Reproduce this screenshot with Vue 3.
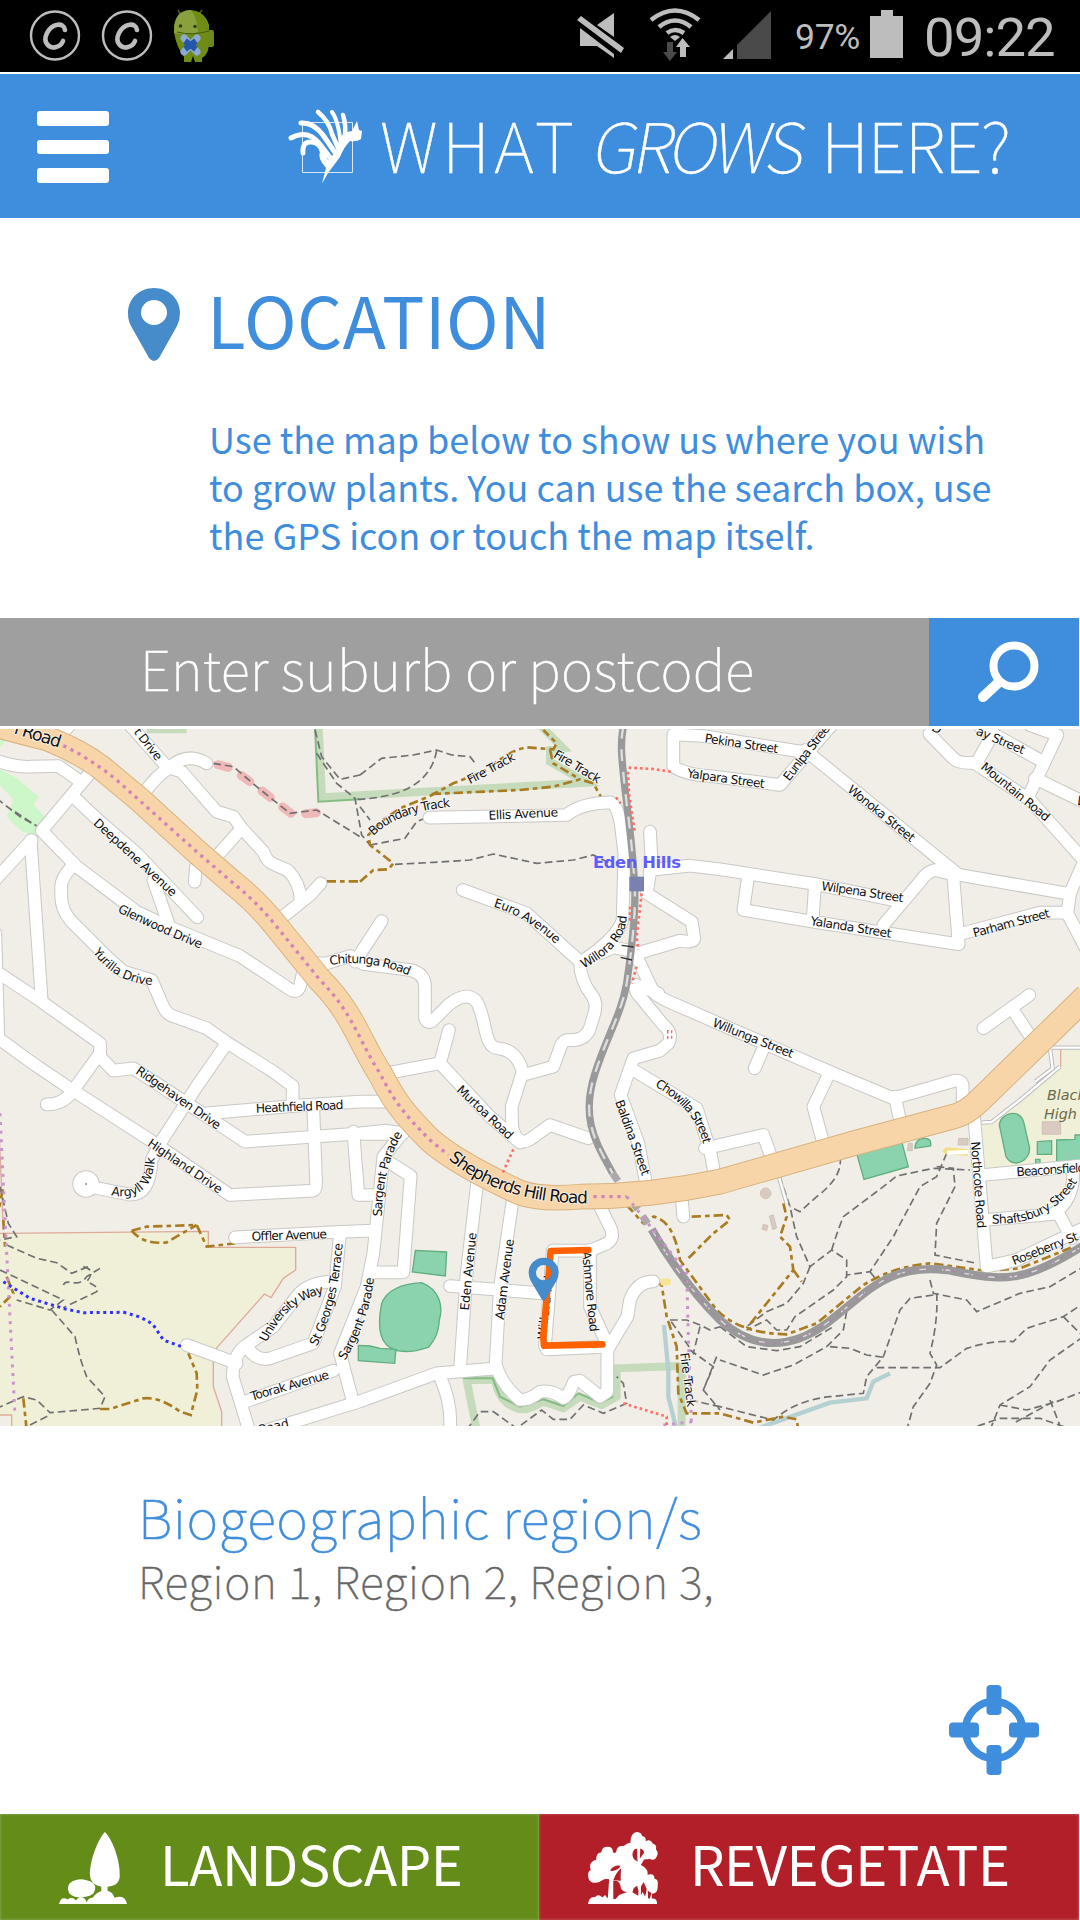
<script setup>
const roads = [
  'M-20 118Q40 142 90 140L175 138L235 180',
  'M265 165L125 332L230 440L410 575L500 618L720 708L870 808Q895 825 902 790L908 760',
  'M222 232L300 305L410 400L592 592',
  'M215 440Q178 480 184 510Q178 565 215 605L320 710L370 755L455 780L490 860Q500 885 530 892L620 925L680 967L820 1055L878 1098V1150',
  'M92 362L125 840', 'M-15 480L95 360',
  'M-10 755L125 845L300 970V1010L340 1052L400 1045L660 1215L735 1265L1080 1240L1160 1232L1210 1240',
  'M-14 640L-5 955', 'M-5 955L110 1038L220 1112L450 1260L690 1425L940 1412Q950 1408 948 1380L940 1165',
  'M300 1000L220 1110Q190 1155 140 1153',
  'M680 970L590 1100L480 1270L455 1320Q450 1425 390 1424L270 1400',
  'M620 1180L900 1156L1080 1145H1200',
  'M390 15L500 140L545 155L650 275L700 290L725 325L790 395Q800 425 820 432L865 452Q900 490 902 540',
  'M428 225Q470 165 510 142Q560 95 620 130', 'M725 325L645 415', 'M588 440L584 485',
  'M962 490L930 525L830 605', 'M460 480L505 610', 'M205 20L180 45',
  'M920 730H980L1050 708L1090 732L1230 750Q1275 760 1275 800V895Q1285 915 1300 900L1345 855Q1400 810 1430 845C1460 895 1450 985 1495 985Q1550 990 1568 1055L1535 1160L1537 1225Q1555 1280 1590 1258L1650 1215L1765 1255',
  'M1145 603L1085 695L1065 725',
  'M1388 510L1580 580L1740 725Q1740 780 1775 825Q1795 850 1780 890L1768 930Q1750 965 1700 960Q1685 965 1680 985L1660 1040L1580 1062',
  'M1288 293L1560 288L1700 285Q1740 250 1830 247Q1850 250 1862 310L1873 400L1868 600Q1850 655 1745 725',
  'M1347 930L1320 1030L1160 1060', 'M1320 1030L1470 1190L1560 1268',
  'M1950 335L1955 430L1940 520L2075 605L2083 655Q2080 670 2040 662L1920 698L1840 682L1800 700',
  'M1910 710L1960 815Q1970 830 2030 855L2160 912L2350 995L2500 1060L2680 1135L2865 1082Q2888 1080 2888 1100V1165',
  'M1975 820L1910 795Q1900 810 1920 830L1990 915Q2020 940 2005 970L1980 992L1900 1015L1862 1125L1915 1270L1940 1400',
  'M1900 1050L2090 1165L2130 1290L2145 1370', 'M2115 1285L2160 1275L2290 1245L2315 1315',
  'M1950 450L2070 437L2160 448L2445 492L2680 540',
  'M2245 465L2230 570L2440 605L2876 673L2860 470', 'M2445 492L2438 600', 'M2870 465L2805 450Q2780 455 2760 485L2650 615',
  'M2415 90L2870 460', 'M2850 460L3210 522L3202 580L3260 690', 'M3210 520L3250 430',
  'M2925 130L3090 240L3260 430', 'M2880 642L3120 578H3200',
  'M2425 98L2110 48L2020 43V140Q2060 165 2130 168L2340 195L2495 15',
  'M2788 42L2860 115Q2875 132 2930 128L2980 40', 'M2940 20L3120 120', 'M3090 15L3172 45L3085 230', 'M3105 175L3260 250',
  'M2950 925L3088 825', 'M3035 865L3095 955', 'M2290 985L2264 1045',
  'M2490 1055L2440 1160L2470 1270', 'M2685 1130L2702 1210',
  'M2922 1185L2960 1640L3050 1620L3260 1520', 'M2950 1365L3260 1335', 'M2955 1500L3160 1482Q3220 1440 3220 1360', 'M3175 1480L3215 1555',
  'M705 1552L1010 1536L1120 1532', 'M1215 1230L1150 1310L1120 1600L1100 1700L1020 1900L1060 2050',
  'M1060 1235L1075 1425H1130', 'M1090 1242H1170', 'M1165 1325L1232 1368L1210 1657H1120',
  'M1020 1540L1005 1700L940 1870L810 1915Q770 1925 740 1880', 'M990 1685Q920 1690 890 1730L820 1820L740 1875Q700 1900 698 1970L750 2140',
  'M560 1875L710 1930', 'M735 2045L1000 1952', 'M770 2140L1080 2044L1310 1960L1490 1945', 'M1320 1970Q1360 2060 1348 2140',
  'M1432 1385L1400 1660L1380 1950', 'M1538 1440L1500 1700L1487 1930Q1500 1990 1560 2040Q1590 2040 1620 2015Q1660 2010 1690 2035Q1705 2030 1722 1985L1740 1982L1800 2030L1822 2015V1880',
  'M1350 1698L1630 1720', 'M1635 1878L1658 1592H1770L1810 1575Q1850 1560 1830 1520L1795 1450', 'M1770 1590V1760L1825 1880L1640 1888',
  'M1825 1885L1882 1790L1890 1740Q1910 1685 1960 1684', 'M2045 1430L2050 1490',
]
const mainRoad = 'M-30 10Q60 35 140 55Q240 95 300 140L420 240L590 395L700 490Q770 545 830 620L960 780C1060 880 1080 970 1140 1060C1180 1140 1210 1180 1290 1260Q1370 1330 1560 1418Q1620 1440 1740 1430Q1950 1430 2160 1385L2560 1270L2860 1190Q2900 1180 2940 1140L3260 828'
const rail = 'M1870 20C1860 70 1865 110 1872 180C1880 260 1895 350 1903 480C1910 570 1895 690 1880 790C1865 880 1820 950 1785 1060C1740 1200 1790 1270 1838 1360'
const tunnel = 'M1838 1360L1960 1535'
const rail2 = 'M1955 1528C2020 1640 2080 1720 2160 1800C2260 1890 2370 1890 2480 1810C2600 1720 2660 1630 2840 1650C3000 1680 3060 1700 3260 1570'
const paths = [
  'M1080 165L1145 115L1240 105L1310 90L1355 105L1410 110L1430 135', 'M1310 92C1290 200 1190 230 1080 238L1060 235',
  'M945 30L965 110L1020 178L1080 165', 'M950 100L1010 190L1065 235L1085 345L1110 375', 'M1110 375L1215 355L1250 305L1275 295', 'M1080 260L1110 300',
  'M640 130L700 140L770 200L870 280L950 270L1080 350', 'M1185 433L1300 427L1410 420L1480 402L1610 430L1720 420L1780 405L1830 430',
  'M-10 235L60 290L105 315', 'M45 275L110 318',
  'M20 1575L110 1615L170 1628L215 1660L265 1640', 'M190 1695C200 1670 230 1710 260 1670L300 1645M250 1640Q290 1650 260 1685Q300 1700 290 1715L190 1763', 'M0 1650L190 1740L150 1770L50 1740', 'M155 1770L225 1850Q240 1920 260 1970L315 2030L300 2065L150 2078L110 2040L70 2030L-10 2065', 'M90 2115L150 2085', 'M0 1400L25 1510L50 1550L0 1560',
  'M1400 2130L1440 2075H1480L1550 2125L1625 2070L1660 2098H1710L1750 2055L1810 2080L1880 2050L1870 1990L1850 1970',
  'M2520 1310Q2530 1370 2450 1430L2400 1475L2370 1460M2340 1370L2370 1460L2390 1550L2430 1640L2495 1590L2540 1620V1670L2500 1710L2385 1790L2360 1830H2330L2300 1800L2240 1830',
  'M2495 1590Q2510 1540 2530 1490L2650 1400L2690 1368L2800 1345L2910 1350', 'M2810 1340L2860 1345L2865 1400L2810 1510L2805 1605L2930 1630', 'M2840 1300L2810 1370L2760 1400L2680 1550L2610 1655L2540 1665M2610 1655L2630 1680',
  'M2430 1640L2410 1690L2360 1750L2300 1775L2240 1820', 'M2790 1680L2800 1720L2900 1740L2930 1775L3060 1720L3150 1700L3250 1640', 'M2810 1720Q2815 1800 2790 1900L2810 1935L2790 1990L2740 2060L2720 2130', 'M2800 1725L2730 1735L2700 1770L2650 1910L2600 1970L2590 2020L2490 2030Q2390 2040 2320 2100L2160 2060', 'M2630 1943H2820L2900 1885Q2980 1860 3040 1865L3080 1825L3190 1790L3250 1750', 'M2540 1775L2530 1830L2480 1880L2380 1935L2290 1965L2160 1920', 'M2490 1880L2550 1885L2600 1905L2650 1912',
  'M3190 1790L3250 1850M3250 1850L3150 1920L3090 2000L3000 2055L2970 2130M2900 2130L3000 2095L3120 2095L3220 2130M3000 2055L3080 2070L3170 2045L3260 2010M3150 2040L3185 2130M3160 2045L3040 2110',
  'M2160 1820L2240 1880L2330 1892L2400 1880L2500 1820', 'M2010 1800L2060 1800L2100 1815L2130 1830L2160 1820M2100 1820L2080 1900L2060 1870L2010 1800M2150 1910L2110 2010L2160 2070M2070 1890L2140 1940L2110 2010M2070 2040L2160 2060',
]
const tracks = [
  'M1080 485L1120 450L1165 448L1180 430L1110 375L1105 345L1150 300L1200 265L1290 228L1360 190L1460 150Q1530 90 1580 82L1660 88L1670 70L1630 30',
  'M1295 222L1560 210L1660 200L1740 178L1780 190L1805 235', 'M1650 90L1660 130L1740 178', 'M980 484H1080',
  'M395 1532L440 1520L590 1515L620 1580L705 1570', 'M395 1532Q430 1575 500 1567L590 1515', 'M300 2067H330L430 2035Q480 2030 540 2075L572 2085L592 2010L590 1960L565 1900', 'M-10 1500L10 1400M10 1500L15 1580M20 1670L40 1720L0 1760M70 2035L80 2130',
  'M2350 1450L2360 1490L2340 1550L2370 1580L2380 1650L2240 1825M2380 1650L2405 1685', 'M1880 1455L1930 1510L1960 1490Q2020 1500 2040 1620L2150 1770Q2220 1840 2360 1843L2450 1810L2590 1695Q2680 1640 2790 1630L2960 1653L3060 1645L3220 1580', 'M2075 1490L2180 1485L2190 1500L2140 1540L2060 1620',
  'M1965 1685L1985 1695L2000 1790L2030 1880L2035 2020L2060 2080L2160 2080L2260 2108L2350 2090L2390 2098L2395 2130',
]
const dots = ['M2012 155L1960 147L1890 143L1884 160L1888 230L1905 340', 'M1848 232L1862 250', 'M1890 560L1890 605M1925 520L1910 650L1915 690M1910 740L1895 790', 'M1540 1288L1505 1365', 'M1870 2050L2000 2090V2130']
const labels = [
  ['M40 40L180 84', 'l Road', 52], ['M400 36L470 126', 't Drive'],
  ['M278 312L520 535', 'Deepdene Avenue'], ['M352 575Q440 620 605 688', 'Glenwood Drive'], ['M278 696Q345 790 460 795', 'Yurilla Drive'],
  ['M405 1058L655 1232', 'Ridgehaven Drive'], ['M768 1178L1035 1167', 'Heathfield Road'], ['M440 1276L660 1424', 'Highland Drive'], ['M333 1425Q460 1450 464 1310', 'Argyll Walk'],
  ['M755 1562L985 1555', 'Offler Avenue'], ['M800 1868Q860 1740 975 1720', 'University Way'], ['M950 1880Q1015 1760 1028 1565', 'St Georges Terrace'], ['M1035 1922Q1110 1800 1122 1670', 'Sargent Parade'], ['M756 2042L993 1974', 'Toorak Avenue'], ['M780 2142L870 2120', 'Road'],
  ['M990 735Q1110 715 1230 768', 'Chitunga Road'], ['M1120 348Q1190 275 1355 260', 'Boundary Track'], ['M1410 193L1550 118', 'Fire Track'], ['M1658 110L1795 192', 'Fire Track'], ['M1466 299L1678 289', 'Ellis Avenue'],
  ['M1480 560Q1580 590 1670 675', 'Euro Avenue'], ['M1750 745Q1880 680 1880 585', 'Willora Road'],
  ['M2113 67L2336 100', 'Pekina Street'], ['M2060 172L2296 205', 'Yalpara Street'], ['M2368 185L2500 15', 'Eunlpa Street'], ['M2540 213L2735 370', 'Wonoka Street'], ['M2926 43L3070 104', 'ay Street'], ['M2940 145L3140 308', 'Mountain Road'], ['M3225 250L3290 285', 'Vi'], ['M2792 30L2825 47', 'D'],
  ['M2463 510L2712 547', 'Wilpena Street'], ['M2430 615L2676 654', 'Yalanda Street'], ['M2923 652L3155 590', 'Parham Street'], ['M2135 918L2378 1016', 'Willunga Street'],
  ['M1368 1112L1528 1263', 'Murtoa Road'], ['M1964 1098Q2090 1170 2110 1275', 'Chowilla Street'], ['M1845 1145L1928 1372', 'Baldina Street'], ['M1145 1490Q1150 1330 1210 1240', 'Sargent Parade'],
  ['M1406 1772L1430 1535', 'Eden Avenue'], ['M1511 1800L1542 1555', 'Adam Avenue'], ['M1746 1595L1770 1840', 'Ashmore Road'], ['M1638 1860L1660 1665', 'Willora Rd'], ['M2040 1900L2062 2065', 'Fire Track'],
  ['M2913 1265L2932 1530', 'Northcote Road'], ['M3050 1369L3260 1355', 'Beaconsfield'], ['M2975 1510Q3150 1520 3235 1380', 'Shaftsbury Street'], ['M3042 1636L3240 1558', 'Roseberry St'],
  ['M1345 1317Q1500 1452 1770 1450', 'Shepherds Hill Road', 51],
]
const measured = labels.map(([d, t, s], i) => {
  const el = document.createElementNS('http://www.w3.org/2000/svg', 'path')
  el.setAttribute('d', d)
  return { d, t, s: s || 37, id: 'street-' + i, len: el.getTotalLength() * 0.985 }
})
</script>

<template>
  <main class="screen">
    <div class="status">
      <svg class="notif" width="216" height="72" viewBox="0 0 216 72">
        <g v-for="x in [55, 127]" :key="x" fill="none" stroke="#bdbdbd">
          <circle :cx="x" cy="35.5" r="24" stroke-width="2.4" />
          <path :d="`M${x + 10} 30C${x + 9} 22 ${x - 3} 23 ${x - 8} 33S${x - 5} 49 ${x + 1} 47Q${x + 6} 46 ${x + 8} 41`" stroke-width="4.6" stroke-linecap="round" />
        </g>
        <path d="M178 10l3 5M202 10l-3 4" stroke="#53661d" stroke-width="1.5" />
        <path d="M174 32q0-21 16-22q15 1 19 15v20q-1 10-7 13v4h-7l-2-6l-2 6h-7v-5q-8-11-10-25z" fill="#6f8d16" />
        <path d="M180 13q-5 5-6 13v7q15 3 24-1q-1-15-7-22q-6 0-11 3z" fill="#91a84a" opacity=".75" />
        <rect x="207" y="30" width="7" height="17" rx="2" fill="#6c8a18" />
        <path d="M177 32q15 4 32-1" fill="none" stroke="#42590d" />
        <circle cx="180.500" cy="26" r="1.800" fill="#333f12" /><circle cx="195" cy="26.500" r="1.800" fill="#333f12" />
        <path d="M184 38l13 14M197 38l-13 14" stroke="#8caad2" stroke-width="7" stroke-linecap="round" />
        <path d="M185 41l11 8M196 41l-11 8" stroke="#2457a9" stroke-width="6" />
      </svg>
      <svg width="200" height="72" viewBox="572 0 200 72" class="signals">
        <path d="M580 28v18h17l17 12V54zM597 25l17-12v24zM577 20l4-4l43 32l-3 5z" fill="#bdbdbd" />
        <path d="M651 20Q675 1 699 20M659 27Q675 14 691 27M667 33Q675 27 684 33" fill="none" stroke="#bdbdbd" stroke-width="4.600" />
        <path d="M670 37Q675 33 680 37L675 41z" fill="#bdbdbd" />
        <path d="M667 42h6v10h4l-7 9l-7-9h4z" fill="#4a4a4a" /><path d="M680 57V47h-4l6.500-9l7.500 9h-4v10z" fill="#bdbdbd" />
        <path d="M723 59l10-10v10z" fill="#bdbdbd" /><path d="M737 59V45l34-34v48z" fill="#4a4a4a" />
      </svg>
      <span class="percent">97%</span>
      <svg width="34" height="72" viewBox="0 0 34 72" class="battery"><path d="M0 16h11v-6h12v6h10v42H0z" fill="#bdbdbd" /></svg>
      <span class="clock">09:22</span>
    </div>

    <header class="header">
      <div class="menu"><i /><i /><i /></div>
      <svg class="brand" width="740" height="144" viewBox="280 74 740 144">
        <path d="M302.500 122.500h50v50h-50z" fill="none" stroke="#d8e8f8" stroke-width="1" />
        <g fill="none" stroke="#fff" stroke-linecap="round">
          <path d="M291 138Q307 129 319 143L332 160" stroke-width="5" /><path d="M303 153Q302 141 312 142Q320 143 322 151L326 162" stroke-width="5" />
          <path d="M301 123Q313 122 323 135L336 154" stroke-width="5" /><path d="M318 112Q329 121 332 134L339 150" stroke-width="4.500" /><path d="M332 112Q339 122 341 147" stroke-width="4" /><path d="M343 115Q347 127 344 143" stroke-width="4.500" />
        </g>
        <path d="M322 183.500L326 168Q317 158 320 152L328 160L336 152L340 137Q346 131 352 131L357 121L359 130L362 131L361 139Q357 142 350 141Q344 147 340 157L328 173z" fill="#fff" />
        <g class="brand-text">
          <text x="380" y="172.500" textLength="194">WHAT</text>
          <text transform="translate(590 172.500) skewX(-10)" textLength="212">GROWS</text>
          <text x="821" y="172.500" textLength="190">HERE?</text>
        </g>
      </svg>
    </header>

    <section class="intro">
      <svg class="pin" width="52" height="74" viewBox="0 0 52 74"><path fill-rule="evenodd" d="M26 0C11 0 0 11 0 25q0 8 3 13l18 32q5 6 10 0l18-32q3-6 3-13C52 11 41 0 26 0zm0 12a13 12.500 0 1 1 0 25a13 12.500 0 1 1 0-25z" fill="#468bca" /></svg>
      <div class="intro-text">
        <h1>LOCATION</h1>
        <p><span>Use the map below to show us where you wish</span><span>to grow plants. You can use the search box, use</span><span>the GPS icon or touch the map itself.</span></p>
      </div>
    </section>

    <div class="search">
      <div class="field"><span>Enter suburb or postcode</span></div>
      <button><svg width="62" height="62" viewBox="0 0 62 62" fill="none" stroke="#fff"><circle cx="37" cy="25" r="20.500" stroke-width="8" /><path d="M21 42L6 56" stroke-width="10" stroke-linecap="round" /></svg></button>
    </div>

    <svg class="map" width="1080" height="697" viewBox="0 27 3240 2091" fill="none">
      <path d="M0 27H3240V2118H0z" fill="#f1eee8" />
      <path d="M-5 1540L625 1534V1582H887V1650L850 1675L813 1733L793 1722L640 1895V2000L665 2075V2130H35V2085H-5z" fill="#f0f0d8" stroke="#deaa9a" stroke-width="4" />
      <path d="M3182 1000V1040L3060 1150L2945 1210V1350H3245V985H3182z" fill="#f0f0d8" /><path d="M3182 985V1040L3050 1153H3035M-5 1180L10 1530" stroke="#deaa9a" stroke-width="4" />
      <path d="M-5 145L50 175L118 230L100 255L135 290L100 350L60 330L20 290L40 240L-5 190zM-5 50L18 60L-5 90" fill="#cdf7c9" />
      <g stroke="#add1a5" stroke-opacity=".65" stroke-width="24"><path d="M440 28H560M956 20L966 232L1080 226L1760 188L1650 125V90L1690 85L1620 15M1430 2130L1400 1980H1485C1500 2060 1560 2080 1600 2060L1630 2045L1690 2065L1740 2030L1805 2055L1850 2030V1945L2045 1938V2130" /></g>
      <path d="M945 20L955 245L1080 238M1390 1975H1478L1500 2030L1560 2060L1630 2038L1690 2058L1735 2020L1800 2048L1840 2030" stroke="#83bd82" stroke-width="6" />
      <g stroke="#b5d0d0" stroke-width="13"><path d="M1992 1815L2005 1950V2030L2030 2130M2670 1960L2620 1985L2600 2035L2490 2048L2260 2130" /></g>
      <g fill="#8ad3ae" stroke="#61ae80" stroke-width="4">
        <path d="M1246 1591L1340 1596L1336 1668L1237 1656zM1145 1750C1165 1700 1230 1690 1265 1688C1320 1710 1330 1760 1318 1800C1315 1850 1295 1870 1285 1882C1230 1900 1185 1898 1160 1875C1135 1850 1135 1800 1145 1750zM1075 1876L1110 1878L1140 1885L1188 1888L1184 1930L1075 1922zM2570 1300L2704 1260L2725 1340L2592 1378zM2745 1285Q2745 1255 2775 1255Q2795 1255 2792 1278zM2998 1215C3000 1180 3060 1160 3072 1210L3088 1280C3095 1320 3040 1350 3018 1310zM3112 1265L3155 1262V1303H3112zM3170 1260L3225 1258V1245H3250V1320L3170 1332zM3107 1318H3120V1335H3107z" />
      </g>
      <g fill="#d9cbc2" stroke="#c7b8ad" stroke-width="2"><circle cx="2297" cy="1420" r="16" /><path d="M2308 1488l12-4l10 40l-12 5zM2290 1512l14 5l-4 15l-14-4zM2725 1270h12v22h-15zM2876 1255h28v20h-30zM3127 1205h55v38h-55z" /></g>
      <g stroke="#f0b9b9" stroke-width="27" stroke-linecap="round" stroke-dasharray="32 46"><path d="M654 134L695 145L770 200L840 255L880 285L950 278" /></g>
      <g class="footpath"><path v-for="d in paths" :key="d" :d="d" /></g>
      <g class="track"><path v-for="d in tracks" :key="d" :d="d" /></g>
      <path d="M3140 983H3250M3150 985L3158 1045L3105 1085M2945 1208L2975 1206L3060 1140L3180 1040M2335 1365L2360 1450" stroke="#bbb" stroke-width="13" /><path d="M3140 983H3250M3150 985L3158 1045L3105 1085M2945 1208L2975 1206L3060 1140L3180 1040M2335 1365L2360 1450" stroke="#fff" stroke-width="7" />
      <path d="M2835 1300L2842 1292L2905 1298" stroke="#f3df82" stroke-width="20" /><path d="M2842 1298L2905 1296" stroke="#fff" stroke-width="12" />
      <g class="casing"><path v-for="d in roads" :key="d" :d="d" /></g><circle cx="258" cy="1392" r="41" fill="#c8c8c5" />
      <g class="street"><path v-for="d in roads" :key="d" :d="d" /></g><circle cx="258" cy="1392" r="38" fill="#fff" /><circle cx="258" cy="1392" r="3" fill="#888" />
      <path :d="rail" stroke="#999" stroke-width="22" /><path :d="rail" stroke="#ddd" stroke-width="7" stroke-dasharray="36 32" />
      <path :d="tunnel" stroke="#aaa" stroke-width="22" stroke-dasharray="28 24" /><path :d="rail2" stroke="#999" stroke-width="25" /><path :d="rail2" stroke="#ddd" stroke-width="4" stroke-dasharray="24 44" />
      <path :d="mainRoad" stroke="#d8b37e" stroke-width="77" /><path :d="mainRoad" stroke="#f8d5a9" stroke-width="71" />
      <g stroke="#d184b8" stroke-width="10" stroke-dasharray="10 14"><path d="M190 77Q270 115 350 180L590 395L700 490Q770 545 830 620L960 780C1060 880 1080 970 1140 1060C1180 1140 1210 1180 1290 1260L1345 1305M1780 1430H1880" /></g>
      <g stroke="#cc92cf" stroke-width="9" stroke-dasharray="9 17"><path d="M1880 1430L1960 1530L2060 1660L2065 1850L2075 2130M0 1180L20 1600L45 2085M1990 2115L2080 2105" /></g>
      <path :d="rail2" stroke="#b07fb0" stroke-width="5" stroke-dasharray="6 20" />
      <path d="M10 1685L90 1735L200 1768L250 1778L370 1777Q430 1790 460 1815L490 1860L545 1880" stroke="#3030ff" stroke-width="9" stroke-dasharray="9 11" />
      <g stroke="#fd7066" stroke-width="8" stroke-dasharray="8 9"><path v-for="d in dots" :key="d" :d="d" /></g>
      <path d="M2003 932v22h12v-22z" stroke="#f66" stroke-width="4" stroke-dasharray="9 7" /><path d="M1982 1676h30v20h-30z" fill="#f6e593" />
      <path d="M1865 676l36 5M1862 712l34 8" stroke="#333" stroke-width="4" />
      <path d="M1888 470h44v44h-44z" fill="#7981b0" />
      <defs><path v-for="l in measured" :id="l.id" :key="l.id" :d="l.d" /></defs>
      <g class="names"><text v-for="l in measured" :key="l.id" :font-size="l.s" :textLength="l.len"><textPath :href="'#' + l.id">{{ l.t }}</textPath></text></g>
      <path d="M1765 1590L1652 1593L1630 1850L1632 1877L1807 1873" stroke="#ff6000" stroke-width="20" stroke-linecap="round" stroke-linejoin="round" />
      <path d="M1631 1613a45 45 0 0 0-45 45q0 14 7 26l32 54q6 8 12 0l32-54q7-12 7-26a45 45 0 0 0-45-45zm0 22a23 23 0 1 1 0 46a23 23 0 1 1 0-46z" fill="#468bca" fill-rule="evenodd" />
      <text class="station" x="1779" y="445" textLength="264">Eden Hills</text>
      <g class="school"><text x="3141" y="1140">Blackwood</text><text x="3132" y="1196">High School</text></g>
    </svg>

    <section class="regions">
      <h2>Biogeographic region/s</h2>
      <p>Region 1, Region 2, Region 3,</p>
      <svg class="gps" width="90" height="90" viewBox="0 0 90 90"><circle cx="45" cy="45" r="28.500" fill="none" stroke="#3f8ddd" stroke-width="7.500" /><g fill="#3f8ddd"><rect x="37.500" width="15" height="30" rx="4" /><rect x="37.500" y="60" width="15" height="30" rx="4" /><rect y="37.500" width="30" height="15" rx="4" /><rect x="60" y="37.500" width="30" height="15" rx="4" /></g></svg>
    </section>

    <footer class="actions">
      <div class="action green">
        <svg width="68" height="72" viewBox="0 0 196 210" preserveAspectRatio="none" fill="#fff"><path d="M132 0C110 25 89 85 89 125Q90 155 122 160V172Q105 178 98 191Q84 192 80 205Q75 191 66 190Q90 190 100 178Q118 145 65 138Q24 140 26 168Q28 190 60 191Q52 193 49 200Q37 185 25 197Q6 185 0 210H196Q190 180 160 192Q156 175 140 172V160Q173 157 175 132C178 82 152 18 132 0z" /></svg>
        <span>LANDSCAPE</span>
      </div>
      <div class="action red">
        <svg width="70" height="72" viewBox="0 0 205 210" preserveAspectRatio="none"><path fill="#fff" d="M0 210Q4 187 20 190Q31 179 42 191L50 184L58 194L62 138Q48 136 42 141C22 155 2 147 1 132Q-2 115 8 111Q0 87 24 81Q23 61 39 59Q41 43 57 43Q73 43 73 59Q83 65 84 52Q87 38 105 41Q114 32 124 31Q125 0 144 0Q157 1 158 12Q171 14 169 27Q182 18 190 34Q202 36 199 50Q208 62 201 72Q196 85 181 79L164 80L155 96Q178 107 174 125Q194 119 195 136Q207 138 204 155Q206 180 187 180V194Q203 192 202 210z" /><g fill="#b21f28"><path d="M65 114q5-17 30-16q-2 12-25 16zM74 141q10-26 23-35q-2 20-1 36zM74 195V143q15-3 21 12q0 18 20 20l-24 9q-5 7-11 12zM130 65q3-18 14-16l1 37q-14-5-15-21zM153 48q12 3 11 13l-12 16zM134 163l10-6q6 14 3 29l-17-10zM155 159l8-13l9 20q-2 15-5 22l-7-13l-5 10zM175 171l11 7l-5 17l-5-2z" /></g></svg>
        <span>REVEGETATE</span>
      </div>
    </footer>
  </main>
</template>

<style>
body { margin: 0; background: #fff; }
</style>
<style scoped>
.screen { width: 1080px; height: 1920px; display: flex; flex-direction: column; background: #fff; font-family: "Noto Sans CJK SC", "Noto Sans", sans-serif; overflow: hidden; }
.status { height: 72px; background: #000; color: #bdbdbd; display: flex; font-family: Roboto, sans-serif; margin-bottom: 2px; flex: none; }
.signals { margin-left: 356px; }
.percent { font-size: 35.500px; line-height: 41px; margin: 17px 0 0 23px; width: 75px; letter-spacing: -.3px; white-space: nowrap; }
.clock { font-size: 54.500px; line-height: 64px; margin: 5px 0 0 20px; letter-spacing: -1px; }
.header { height: 144px; background: #3f8ddd; display: flex; align-items: center; flex: none; }
.menu { display: flex; flex-direction: column; gap: 14px; width: 72px; margin: 2px 171px 0 37px; }
.menu i { height: 14.500px; background: #fff; border-radius: 3px; }
.brand-text { fill: #fff; font-size: 68.500px; font-weight: 100; stroke: #fff; stroke-width: .5px; }
.intro { height: 400px; display: flex; color: #3f8ddd; flex: none; }
.pin { margin: 70px 29px 0 128px; }
h1, h2, p { margin: 0; font-weight: 400; white-space: nowrap; }
h1 { font-size: 71px; line-height: 80px; margin: 60px 0 0 -2px; letter-spacing: .4px; }
.intro p { font-size: 36px; line-height: 48px; margin-top: 56px; }
.intro p span { display: block; }
.search { height: 108px; display: flex; margin-bottom: 3px; width: 1079px; flex: none; }
.field { flex: 1; background: #9f9f9f; color: #fff; font-size: 54.500px; font-weight: 100; padding-left: 140px; line-height: 99px; letter-spacing: .3px; -webkit-text-stroke: .5px #fff; white-space: nowrap; }
.search button { width: 150px; border: 0; padding: 0 0 0 7px; background: #3f8ddd; display: flex; align-items: center; justify-content: center; }
.map { display: block; flex: none; }
.footpath { stroke: #707070; stroke-width: 5; stroke-dasharray: 23 12; }
.track { stroke: #a97c22; stroke-width: 8; stroke-dasharray: 28 12 14 12; }
.casing { stroke: #c8c8c5; stroke-width: 41; stroke-linecap: round; stroke-linejoin: round; }
.street { stroke: #fff; stroke-width: 35; stroke-linecap: round; stroke-linejoin: round; }
.names { fill: #111; font-family: "DejaVu Sans", sans-serif; stroke: rgba(255,255,255,.75); stroke-width: 5px; paint-order: stroke; }
.station { fill: #5d5dff; font-family: "DejaVu Sans", sans-serif; font-size: 49px; font-weight: 700; }
.school { fill: #6a6a4c; font-family: "DejaVu Sans", sans-serif; font-style: italic; font-size: 43px; }
.regions { height: 388px; padding-left: 138px; position: relative; box-sizing: border-box; flex: none; }
.regions h2 { font-size: 54px; line-height: 70px; font-weight: 100; color: #3f8ddd; margin-top: 55px; letter-spacing: .55px; -webkit-text-stroke: .5px #3f8ddd; }
.regions p { font-size: 44.500px; line-height: 58px; font-weight: 100; color: #666; letter-spacing: .75px; -webkit-text-stroke: .5px #666; }
.gps { position: absolute; left: 948.500px; top: 258.500px; }
.actions { height: 106px; display: flex; color: #fff; flex: none; width: 1079px; }
.action { display: flex; align-items: center; font-size: 54.500px; letter-spacing: -.5px; width: 539px; box-sizing: border-box; box-shadow: inset 0 0 3px rgba(255,255,255,.35); white-space: nowrap; }
.action span { line-height: 100px; margin-top: -8px; }
.action svg { margin-top: 2px; }
.green { background: #638c19; padding-left: 59px; }
.green span { margin-left: 33px; }
.red { background: #b21f28; width: 540px; padding-left: 49px; }
.red span { margin-left: 32px; }
</style>
